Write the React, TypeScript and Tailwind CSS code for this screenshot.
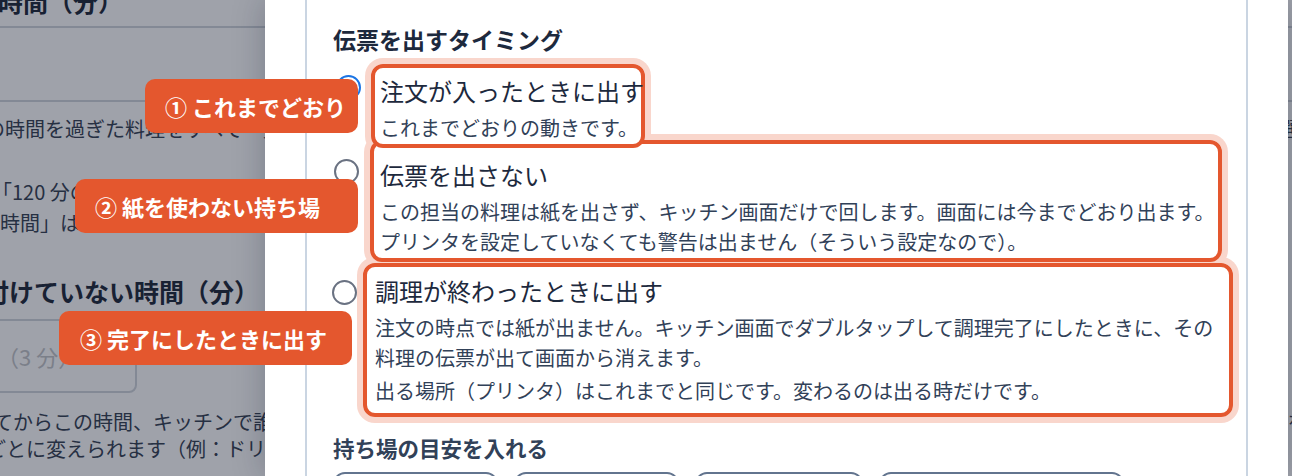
const ORANGE = "border-[#e4572e]";

const options = [
  {
    id: 1,
    rowClass: "mt-[9px]",
    radioClass: "mt-[11px] ml-[3px] border-[#1b74e4]",
    checked: true,
    boxClass: "ml-[10px] w-[274px]",
    innerClass: "z-30 pl-[5px] pt-[5px] pb-[1px]",
    title: "注文が入ったときに出す",
    lines: ["これまでどおりの動きです。"],
    extra: null as string | null,
  },
  {
    id: 2,
    rowClass: "-mt-[8px]",
    radioClass: "mt-[19px] ml-[1px] border-gray-500",
    checked: false,
    boxClass: "ml-[11px] w-[852px]",
    innerClass: "z-20 pl-[6px] pt-[13px] pb-[1px]",
    title: "伝票を出さない",
    lines: [
      "この担当の料理は紙を出さず、キッチン画面だけで回します。画面には今までどおり出ます。",
      "プリンタを設定していなくても警告は出ません（そういう設定なので）。",
    ],
    extra: null,
  },
  {
    id: 3,
    rowClass: "mt-[1px]",
    radioClass: "mt-[17px] -ml-[1px] border-gray-500",
    checked: false,
    boxClass: "ml-[6px] w-[870px]",
    innerClass: "z-10 pl-[8px] pt-[6px] pb-[7px]",
    title: "調理が終わったときに出す",
    lines: [
      "注文の時点では紙が出ません。キッチン画面でダブルタップして調理完了にしたときに、その",
      "料理の伝票が出て画面から消えます。",
    ],
    extra: "出る場所（プリンタ）はこれまでと同じです。変わるのは出る時だけです。",
  },
];

const badges = [
  { id: 1, label: "① これまでどおり", pos: "left-[145px] top-[79px] w-[213px]" },
  { id: 2, label: "② 紙を使わない持ち場", pos: "left-[75px] top-[179px] w-[283px]" },
  { id: 3, label: "③ 完了にしたときに出す", pos: "left-[59px] top-[311px] w-[293px] pl-[21px]" },
];

const stations = [
  { id: 1, label: "目安なし", w: "w-[165px]" },
  { id: 2, label: "5 分", w: "w-[165px]" },
  { id: 3, label: "10 分", w: "w-[168px]" },
  { id: 4, label: "自分で入れる", w: "w-[245px]" },
];

function BackgroundPage() {
  return (
    <div className="whitespace-nowrap text-gray-700">
      <div className="-mt-[18px] -ml-[2px] h-[38px] text-[25px] font-bold leading-[38px] text-gray-800">
        時間（分）
      </div>
      <div className="mt-[6px] -ml-[40px] h-[76px] w-[1400px] border-y-2 border-gray-300" />
      <div className="mt-[12px] -ml-[15px] text-[20px] leading-[30px]">
        の時間を過ぎた料理をすべて一覧に表示し、キッチンの担当者に知らせます。設定した時間を過ぎると、画面の色が変わります。色は担当ごとに選べます。
      </div>
      <div className="mt-[32px] text-[20px] leading-[31px]">
        <div className="-ml-[8px]">「120 分の料理」は一覧に出ません。</div>
        <div>時間」はそれぞれの料理ごとに変えられます。</div>
      </div>
      <div className="mt-[35px] -ml-[16px] text-[25px] font-bold leading-[36px] text-gray-800">
        付けていない時間（分）
      </div>
      <div className="mt-[10px] -ml-[10px] flex h-[74px] w-[147px] items-center rounded-lg border-2 border-gray-300 pl-[5px] text-[22px] text-[#c3c5c9]">
        （3 分）
      </div>
      <div className="mt-[15px] text-[20px] leading-[27px]">
        <div className="-ml-[7px]">
          てからこの時間、キッチンで誰も手を付けていない料理があると、画面でお知らせします。お知らせは担当ごとに出ます。料理の種類ごとに時間を変えることもできます。
        </div>
        <div className="-ml-[14px]">ごとに変えられます（例：ドリンクは 5 分）。</div>
      </div>
    </div>
  );
}

export default function App() {
  return (
    <div className="relative h-[476px] w-[1292px] overflow-hidden bg-white font-['Noto_Sans_CJK_JP','Noto_Sans',sans-serif]">
      <BackgroundPage />

      {/* backdrop */}
      <div className="absolute inset-0 bg-slate-900/40" />

      {/* modal */}
      <div className="absolute inset-y-0 left-[265px] right-[4px] z-0 bg-white px-10 shadow-[0_0_30px_rgba(15,23,42,0.25)]">
        <div className="h-full border-x-2 border-slate-300 px-[26px] pt-[23px]">
          <h2 className="text-[23px] font-bold leading-[32px] text-slate-800">伝票を出すタイミング</h2>

          {options.map((o) => (
            <div key={o.id} className={`flex items-start ${o.rowClass}`}>
              <span
                className={`flex h-[25px] w-[25px] shrink-0 items-center justify-center rounded-full border-2 bg-white ${o.radioClass}`}
              >
                {o.checked && <span className="h-[13px] w-[13px] rounded-full bg-[#1b74e4]" />}
              </span>
              <div className={`shrink-0 rounded-[12px] shadow-[0_0_0_6px_#f9d6cc] ${o.boxClass}`}>
                <div className={`relative rounded-[12px] border-4 ${ORANGE} bg-white ${o.innerClass}`}>
                  <div className="whitespace-nowrap text-[24px] leading-[36px] text-slate-800">{o.title}</div>
                  <div className="mt-[4px] whitespace-nowrap text-[20px] leading-[30px] text-slate-700">
                    {o.lines.map((l) => (
                      <div key={l}>{l}</div>
                    ))}
                    {o.extra && <div className="mt-[3px]">{o.extra}</div>}
                  </div>
                </div>
              </div>
            </div>
          ))}

          <h3 className="mt-[17px] text-[21.5px] font-bold leading-[28px] text-slate-700">持ち場の目安を入れる</h3>
          <div className="mt-[10px] flex gap-4">
            {stations.map((s) => (
              <div
                key={s.id}
                className={`flex h-[56px] items-center justify-center rounded-xl border-2 border-slate-500 text-[18px] text-slate-700 ${s.w}`}
              >
                {s.label}
              </div>
            ))}
          </div>
        </div>
      </div>

      {/* annotation badges */}
      {badges.map((b) => (
        <div
          key={b.id}
          className={`absolute z-10 flex h-[54px] items-center whitespace-nowrap rounded-[10px] bg-[#e4572e] pl-5 text-[22px] font-bold text-white ${b.pos}`}
        >
          {b.label}
        </div>
      ))}
    </div>
  );
}
